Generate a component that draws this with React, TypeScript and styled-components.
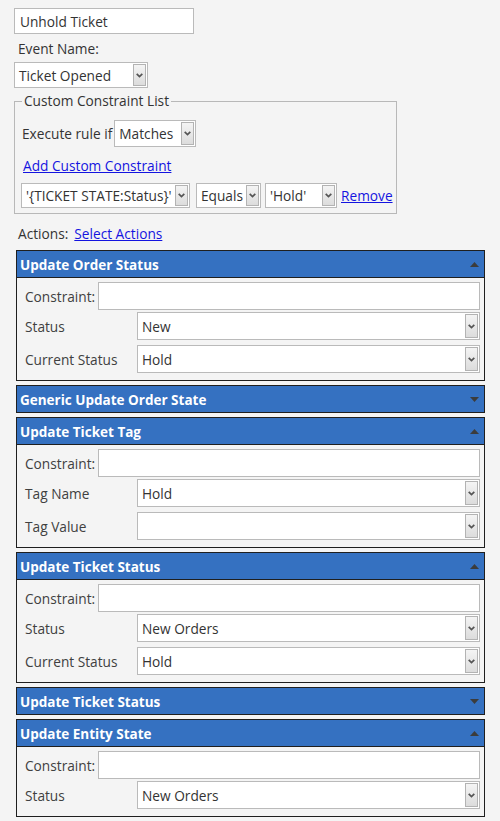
import React from "react";
import styled, { createGlobalStyle } from "styled-components";

const GlobalStyle = createGlobalStyle`
  html, body {
    margin: 0;
    padding: 0;
    background: #f4f4f4;
  }
  body {
    font-family: "Open Sans", "Noto Sans", "DejaVu Sans", sans-serif;
    font-size: 13.7px;
    color: #333;
  }
`;

const Page = styled.div`
  display: flex;
  flex-direction: column;
  align-items: flex-start;
  padding: 8px 15px 8px 14px;
  width: 500px;
  box-sizing: border-box;
`;

const TextInput = styled.input<{ $w?: number; $h?: number }>`
  box-sizing: border-box;
  width: ${(p) => (p.$w ? `${p.$w}px` : "auto")};
  flex: ${(p) => (p.$w ? "none" : "1")};
  min-width: 0;
  height: ${(p) => p.$h ?? 26}px;
  margin: 0;
  border: 1px solid #bababa;
  background: #fff;
  padding: 0 5px;
  font-family: inherit;
  font-size: 13.7px;
  color: #333;
  outline: none;
`;

const Label = styled.div<{ $ml?: number; $mt?: number }>`
  line-height: 18px;
  margin-top: ${(p) => p.$mt ?? 0}px;
  margin-left: ${(p) => p.$ml ?? 0}px;
  white-space: nowrap;
`;

const SelectBox = styled.div<{ $w?: number; $h: number; $mt?: number; $ml?: number }>`
  box-sizing: border-box;
  display: flex;
  align-items: stretch;
  width: ${(p) => (p.$w ? `${p.$w}px` : "auto")};
  flex: ${(p) => (p.$w ? "none" : "1")};
  min-width: 0;
  height: ${(p) => p.$h}px;
  margin-top: ${(p) => p.$mt ?? 0}px;
  margin-left: ${(p) => p.$ml ?? 0}px;
  border: 1px solid #bababa;
  background: #fff;
  padding: 1px;
`;

const SelectValue = styled.div`
  flex: 1;
  min-width: 0;
  display: flex;
  align-items: center;
  padding-left: 3px;
  white-space: nowrap;
  overflow: hidden;
  color: #333;
`;

const ArrowButton = styled.div`
  box-sizing: border-box;
  width: 13px;
  flex: none;
  display: flex;
  align-items: center;
  justify-content: center;
  border: 1px solid #b3b3b3;
  background: linear-gradient(#f4f4f4, #dcdcdc);
`;

const Fieldset = styled.fieldset`
  box-sizing: border-box;
  width: 383px;
  min-width: 0;
  margin: 4px 0 0 0;
  padding: 0 2px 5px 6px;
  border: 1px solid #b8b8b8;
  display: flex;
  flex-direction: column;
  align-items: flex-start;
`;

const Legend = styled.legend`
  padding: 0 2px;
  margin-left: 1px;
  line-height: 18px;
`;

const Line = styled.div<{ $mt?: number }>`
  display: flex;
  align-items: center;
  margin-top: ${(p) => p.$mt ?? 0}px;
`;

const Link = styled.a<{ $ml?: number; $mt?: number }>`
  color: #1414e0;
  text-decoration: underline;
  cursor: pointer;
  line-height: 18px;
  margin-left: ${(p) => p.$ml ?? 0}px;
  margin-top: ${(p) => p.$mt ?? 0}px;
  white-space: nowrap;
`;

const Panels = styled.div`
  display: flex;
  flex-direction: column;
  gap: 4px;
  margin: 7px 0 0 2px;
  width: 469px;
`;

const Panel = styled.section`
  box-sizing: border-box;
  border: 1px solid #1f1f1f;
  background: #f4f4f4;
`;

const PanelHeader = styled.div<{ $open: boolean }>`
  display: flex;
  align-items: center;
  justify-content: space-between;
  padding: 1px 5px 0 3px;
  box-sizing: border-box;
  background: #3571c1;
  color: #fff;
  font-weight: 700;
  font-size: 13.5px;
  border-bottom: ${(p) => (p.$open ? "1px solid #1f1f1f" : "none")};
  height: ${(p) => (p.$open ? 27 : 26)}px;
`;

const PanelBody = styled.div`
  display: flex;
  flex-direction: column;
  padding: 4px 4px 7px 8px;
`;

const FieldRow = styled.div`
  display: flex;
  align-items: center;
  height: 28px;
  &:nth-child(2) {
    margin-top: 2px;
  }
  &:nth-child(n + 3) {
    margin-top: 5px;
  }
`;

const FieldLabel = styled.div<{ $w: number }>`
  width: ${(p) => p.$w}px;
  flex: none;
  color: #404040;
  white-space: nowrap;
`;

const Chevron = () => (
  <svg width="7" height="5" viewBox="0 0 7 5">
    <polyline points="0.7,0.8 3.5,3.6 6.3,0.8" fill="none" stroke="#555" strokeWidth="1.7" />
  </svg>
);

const Triangle = ({ up }: { up: boolean }) => (
  <svg width="9" height="5" viewBox="0 0 9 5">
    <polygon points={up ? "0,5 4.5,0 9,5" : "0,0 4.5,5 9,0"} fill="#3c3c3c" />
  </svg>
);

type SelectProps = { value: string; w?: number; h: number; mt?: number; ml?: number };
const Select = ({ value, w, h, mt, ml }: SelectProps) => (
  <SelectBox $w={w} $h={h} $mt={mt} $ml={ml}>
    <SelectValue>{value}</SelectValue>
    <ArrowButton>
      <Chevron />
    </ArrowButton>
  </SelectBox>
);

type Row = { kind: "input" | "select"; label: string; value?: string };
type PanelData = { title: string; open: boolean; rows?: Row[] };

const constraint: Row = { kind: "input", label: "Constraint:" };

const panels: PanelData[] = [
  {
    title: "Update Order Status",
    open: true,
    rows: [
      constraint,
      { kind: "select", label: "Status", value: "New" },
      { kind: "select", label: "Current Status", value: "Hold" },
    ],
  },
  { title: "Generic Update Order State", open: false },
  {
    title: "Update Ticket Tag",
    open: true,
    rows: [
      constraint,
      { kind: "select", label: "Tag Name", value: "Hold" },
      { kind: "select", label: "Tag Value", value: "" },
    ],
  },
  {
    title: "Update Ticket Status",
    open: true,
    rows: [
      constraint,
      { kind: "select", label: "Status", value: "New Orders" },
      { kind: "select", label: "Current Status", value: "Hold" },
    ],
  },
  { title: "Update Ticket Status", open: false },
  {
    title: "Update Entity State",
    open: true,
    rows: [constraint, { kind: "select", label: "Status", value: "New Orders" }],
  },
];

export default function App() {
  return (
    <>
      <GlobalStyle />
      <Page>
        <TextInput $w={180} $h={26} defaultValue="Unhold Ticket" />
        <Label $ml={4} $mt={6}>
          Event Name:
        </Label>
        <Select value="Ticket Opened" w={134} h={26} mt={4} />
        <Fieldset>
          <Legend>Custom Constraint List</Legend>
          <Line $mt={10}>
            <Label $ml={1}>Execute rule if</Label>
            <Select value="Matches" w={82} h={27} ml={2} />
          </Line>
          <Link $ml={2} $mt={10}>
            Add Custom Constraint
          </Link>
          <Line $mt={8}>
            <Select value="'{TICKET STATE:Status}'" w={169} h={25} />
            <Select value="Equals" w={65} h={25} ml={6} />
            <Select value="'Hold'" w={72} h={25} ml={4} />
            <Link $ml={4}>Remove</Link>
          </Line>
        </Fieldset>
        <Line $mt={11}>
          <Label $ml={4}>Actions:</Label>
          <Link $ml={6}>Select Actions</Link>
        </Line>
        <Panels>
          {panels.map((p, i) => (
            <Panel key={i}>
              <PanelHeader $open={p.open}>
                <span>{p.title}</span>
                <Triangle up={p.open} />
              </PanelHeader>
              {p.open && p.rows && (
                <PanelBody>
                  {p.rows.map((r, j) =>
                    r.kind === "input" ? (
                      <FieldRow key={j}>
                        <FieldLabel $w={73}>{r.label}</FieldLabel>
                        <TextInput $h={28} />
                      </FieldRow>
                    ) : (
                      <FieldRow key={j}>
                        <FieldLabel $w={112}>{r.label}</FieldLabel>
                        <Select value={r.value ?? ""} h={28} />
                      </FieldRow>
                    )
                  )}
                </PanelBody>
              )}
            </Panel>
          ))}
        </Panels>
      </Page>
    </>
  );
}
